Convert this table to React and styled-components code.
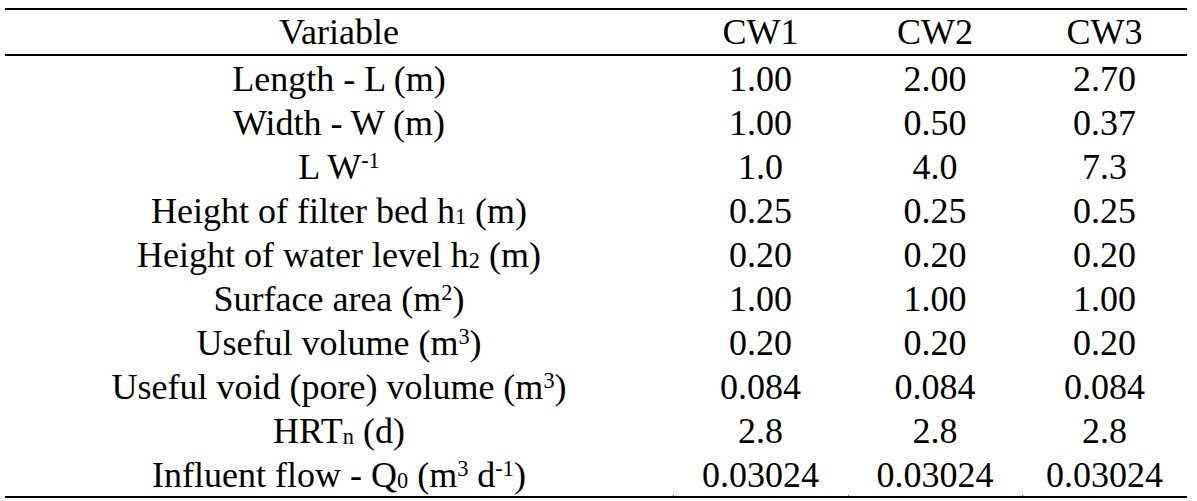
import React from 'react';
import styled, { createGlobalStyle } from 'styled-components';

const GlobalStyle = createGlobalStyle`
  html, body {
    margin: 0;
    padding: 0;
    background: #ffffff;
  }
  body {
    font-family: "Liberation Serif", "DejaVu Serif", serif;
    color: #000000;
  }
`;

const Page = styled.div`
  padding: 8px 10px 0 5px;
`;

const Table = styled.table`
  width: 1182px;
  border-collapse: collapse;
  font-size: 36px;
`;

const HeadCell = styled.th`
  font-weight: normal;
  height: 44px;
  padding: 0;
  line-height: 44px;
  text-align: center;
  border-top: 2px solid #000;
  border-bottom: 2px solid #000;
  width: ${p => p.$w}px;
`;

const Row = styled.tr`
  height: 44px;
  &:last-child td {
    border-bottom: 2px solid #000;
    position: relative;
  }
  &:last-child td + td::before {
    content: '';
    position: absolute;
    left: 0;
    bottom: 0;
    width: 1px;
    height: 1px;
    background: #555;
  }
`;

const Cell = styled.td`
  padding: 2px 0 0;
  line-height: 42px;
  text-align: center;
  white-space: nowrap;
`;

const Sub = styled.sub`
  font-size: 0.62em;
  vertical-align: -0.05em;
  line-height: 0;
`;

const Sup = styled.sup`
  font-size: 0.62em;
  vertical-align: 0.5em;
  line-height: 0;
`;

const rows = [
  [<>Length - L (m)</>, '1.00', '2.00', '2.70'],
  [<>Width - W (m)</>, '1.00', '0.50', '0.37'],
  [<>L W<Sup>-1</Sup></>, '1.0', '4.0', '7.3'],
  [<>Height of filter bed h<Sub>1</Sub> (m)</>, '0.25', '0.25', '0.25'],
  [<>Height of water level h<Sub>2</Sub> (m)</>, '0.20', '0.20', '0.20'],
  [<>Surface area (m<Sup>2</Sup>)</>, '1.00', '1.00', '1.00'],
  [<>Useful volume (m<Sup>3</Sup>)</>, '0.20', '0.20', '0.20'],
  [<>Useful void (pore) volume (m<Sup>3</Sup>)</>, '0.084', '0.084', '0.084'],
  [<>HRT<Sub>n</Sub> (d)</>, '2.8', '2.8', '2.8'],
  [<>Influent flow - Q<Sub>0</Sub> (m<Sup>3</Sup> d<Sup>-1</Sup>)</>, '0.03024', '0.03024', '0.03024'],
];

export default function App() {
  return (
    <>
      <GlobalStyle />
      <Page>
        <Table>
          <thead>
            <tr>
              <HeadCell $w={668}>Variable</HeadCell>
              <HeadCell $w={175}>CW1</HeadCell>
              <HeadCell $w={174}>CW2</HeadCell>
              <HeadCell $w={165}>CW3</HeadCell>
            </tr>
          </thead>
          <tbody>
            {rows.map((r, i) => (
              <Row key={i}>
                {r.map((c, j) => (
                  <Cell key={j}>{c}</Cell>
                ))}
              </Row>
            ))}
          </tbody>
        </Table>
      </Page>
    </>
  );
}
